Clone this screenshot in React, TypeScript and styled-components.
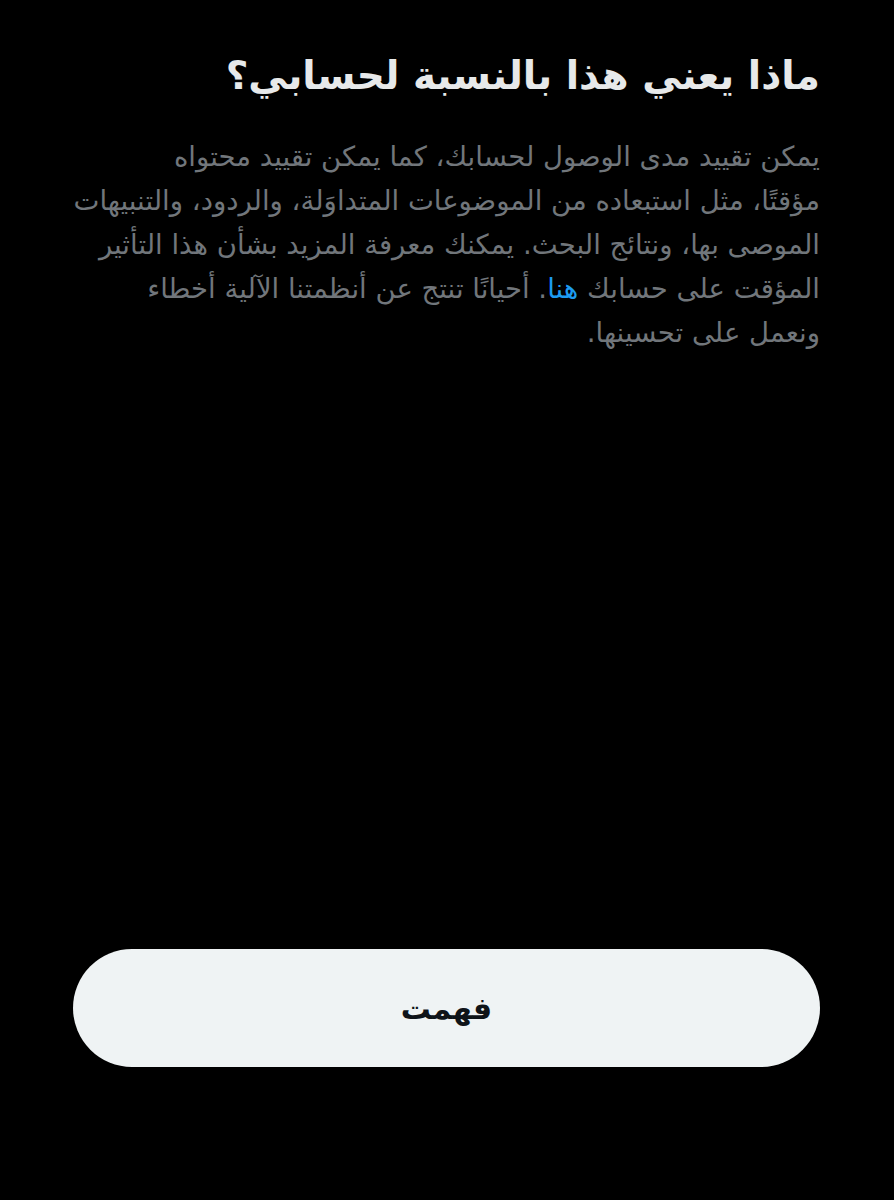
import React from 'react';
import styled, { createGlobalStyle } from 'styled-components';

const GlobalStyle = createGlobalStyle`
  html, body {
    margin: 0;
    padding: 0;
    background: #000;
  }
  body {
    font-family: "DejaVu Sans", "Noto Sans", sans-serif;
  }
`;

const Page = styled.div`
  direction: rtl;
  width: 894px;
  height: 1200px;
  box-sizing: border-box;
  padding: 46px 74px 0 73px;
  display: flex;
  flex-direction: column;
  background: #000;
`;

const Title = styled.h2`
  margin: 0;
  color: #e7e9ea;
  font-size: 39px;
  font-weight: bold;
  line-height: 60px;
  white-space: nowrap;
`;

const Body = styled.p`
  margin: 28px 0 0;
  color: #71767b;
  font-size: 27.5px;
  line-height: 44px;
`;

const Line = styled.span`
  display: block;
  white-space: nowrap;
`;

const Link = styled.a`
  color: #1d9bf0;
  text-decoration: none;
`;

const Spacer = styled.div`
  flex: 1;
`;

const Button = styled.button`
  margin-bottom: 133px;
  width: 100%;
  height: 118px;
  border: none;
  border-radius: 59px;
  background: #eff3f4;
  color: #0f1419;
  font-family: "DejaVu Sans", "Noto Sans", sans-serif;
  font-size: 30px;
  font-weight: bold;
  cursor: pointer;
`;

const lines = [
  'يمكن تقييد مدى الوصول لحسابك، كما يمكن تقييد محتواه',
  'مؤقتًا، مثل استبعاده من الموضوعات المتداوَلة، والردود، والتنبيهات',
  'الموصى بها، ونتائج البحث. يمكنك معرفة المزيد بشأن هذا التأثير',
];

export default function App(): JSX.Element {
  return (
    <>
      <GlobalStyle />
      <Page>
        <Title>ماذا يعني هذا بالنسبة لحسابي؟</Title>
        <Body>
          {lines.map((l) => (
            <Line key={l}>{l}</Line>
          ))}
          <Line>
            المؤقت على حسابك <Link href="#">هنا</Link>. أحيانًا تنتج عن أنظمتنا الآلية أخطاء
          </Line>
          <Line>ونعمل على تحسينها.</Line>
        </Body>
        <Spacer />
        <Button>فهمت</Button>
      </Page>
    </>
  );
}
